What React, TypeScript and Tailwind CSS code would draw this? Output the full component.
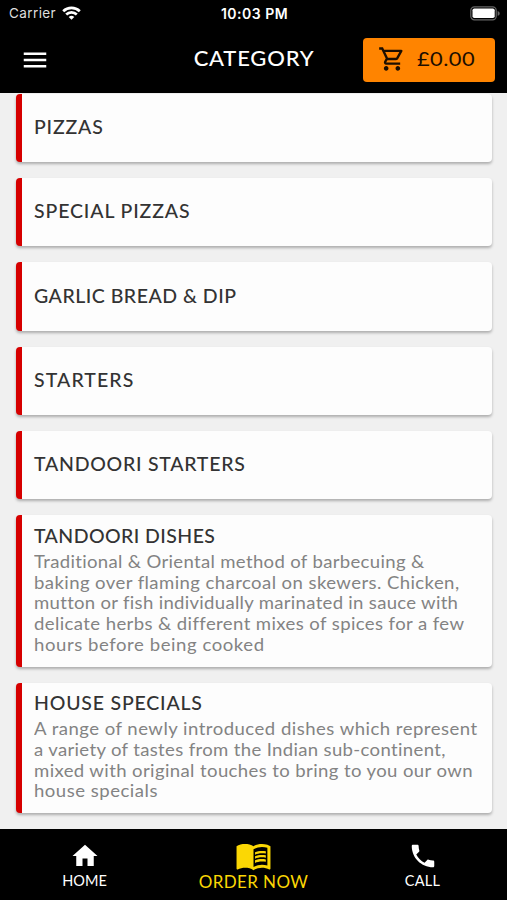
import { MdHome, MdMenu, MdMenuBook, MdOutlineShoppingCart, MdPhone } from "react-icons/md";

const categories = [
    { title: "PIZZAS", tracking: "tracking-[0.8px]", lines: [] },
    { title: "SPECIAL PIZZAS", tracking: "tracking-[0.87px]", lines: [] },
    { title: "GARLIC BREAD & DIP", tracking: "tracking-[0.5px]", lines: [] },
    { title: "STARTERS", tracking: "tracking-[1.1px]", lines: [] },
    { title: "TANDOORI STARTERS", tracking: "tracking-[0.74px]", lines: [] },
    {
        title: "TANDOORI DISHES",
        tracking: "tracking-[0.42px]",
        lines: [
            { text: "Traditional & Oriental method of barbecuing &", tracking: "tracking-[0.31px]" },
            { text: "baking over flaming charcoal on skewers. Chicken,", tracking: "tracking-[0.39px]" },
            { text: "mutton or fish individually marinated in sauce with", tracking: "tracking-[0.28px]" },
            { text: "delicate herbs & different mixes of spices for a few", tracking: "tracking-[0.37px]" },
            { text: "hours before being cooked", tracking: "tracking-[0.53px]" },
        ],
    },
    {
        title: "HOUSE SPECIALS",
        tracking: "tracking-[0.8px]",
        lines: [
            { text: "A range of newly introduced dishes which represent", tracking: "tracking-[0.45px]" },
            { text: "a variety of tastes from the Indian sub-continent,", tracking: "tracking-[0.32px]" },
            { text: "mixed with original touches to bring to you our own", tracking: "tracking-[0.36px]" },
            { text: "house specials", tracking: "tracking-[0.47px]" },
        ],
    },
];

type Category = (typeof categories)[number];

function StatusBar() {
    return (
        <div className="grid h-[27px] grid-cols-3 items-center pl-[9px] pr-[7px] font-[Inter,sans-serif] text-[13.5px] text-white">
            <div className="flex items-center gap-1.5">
                <span className="tracking-[0.4px] text-[#dedede]">Carrier</span>
                <svg className="mb-[2px] h-[14px] w-[19px]" viewBox="0 0 19 14" fill="none" stroke="#fff" strokeWidth="2.7">
                    <path d="M1.2 5.2a11.9 11.9 0 0 1 16.6 0" />
                    <path d="M4.2 8.5a7.6 7.6 0 0 1 10.6 0" />
                    <path d="M9.5 13.8 6.7 11a4 4 0 0 1 5.6 0z" fill="#fff" stroke="none" />
                </svg>
            </div>
            <span className="text-center text-[14px] font-semibold tracking-[0.5px]">10:03 PM</span>
            <svg className="h-[15px] w-[30px] justify-self-end" viewBox="0 0 30 15">
                <rect x="0.8" y="0.8" width="25.4" height="13" rx="3.6" fill="none" stroke="#666" strokeWidth="1.2" />
                <rect x="2.5" y="2.5" width="22.2" height="9.6" rx="1.8" fill="#fff" />
                <path d="M27.6 5v4.8c2.8-.8 2.8-4 0-4.8z" fill="#666" />
            </svg>
        </div>
    );
}

function Header() {
    return (
        <header className="h-[93px] shrink-0 bg-black">
            <StatusBar />
            <div className="grid h-[65px] grid-cols-[1fr_133px_1fr] items-center pl-[20px] pr-[12px] text-white">
                <MdMenu className="size-[30px]" />
                <h1 className="-ml-[7px] pb-[5px] text-center text-[22px] font-medium whitespace-nowrap tracking-[0.8px]">CATEGORY</h1>
                <button className="flex h-[44px] w-[132px] items-center gap-[11px] justify-self-end rounded-[4px] bg-[#ff8400] pl-[15px] pb-px text-[#1c0e00]">
                    <MdOutlineShoppingCart className="size-[28px]" />
                    <span className="origin-left scale-x-112 text-[19.5px] tracking-[0.4px]">£0.00</span>
                </button>
            </div>
        </header>
    );
}

function CategoryCard({ category }: { category: Category }) {
    const detailed = category.lines.length > 0;

    return (
        <article className={`flex shrink-0 flex-col rounded-[4px] border-l-[6px] border-[#d60000] bg-[#fdfdfd] pl-3 shadow-[0_2px_3px_rgba(0,0,0,0.28)] ${detailed ? "pt-[7.7px] pb-[11.2px]" : "h-[68.3px] justify-center pb-[1.6px]"}`}>
            <h2 className={`text-[19.5px] leading-[26px] font-medium whitespace-nowrap text-[#333] ${category.tracking}`}>{category.title}</h2>
            {detailed && (
                <div className="mt-[3px] origin-left scale-x-106">
                    {category.lines.map((line) => (
                        <p key={line.text} className={`text-[17.5px] leading-[20.7px] whitespace-nowrap text-[#838383] ${line.tracking}`}>
                            {line.text}
                        </p>
                    ))}
                </div>
            )}
        </article>
    );
}

function BottomNav() {
    return (
        <nav className="grid h-[71px] shrink-0 grid-cols-3 bg-black text-center text-[14.5px] text-white">
            <a className="flex flex-col items-center pt-[12px]">
                <MdHome className="size-[30px]" />
                <span className="-mt-px">HOME</span>
            </a>
            <a className="flex flex-col items-center pt-[8px] text-[#fbd704]">
                <MdMenuBook className="size-[37px]" />
                <span className="-mt-[5px] text-[17px] tracking-[0.4px]">ORDER NOW</span>
            </a>
            <a className="flex flex-col items-center pt-[12px]">
                <MdPhone className="size-[30px]" />
                <span className="-mt-px tracking-[0.3px]">CALL</span>
            </a>
        </nav>
    );
}

export default function App() {
    return (
        <div className="flex h-[900px] w-[507px] flex-col overflow-hidden bg-[#f0f0f0] font-[Lato,sans-serif]">
            <Header />
            <main className="flex min-h-0 flex-1 flex-col gap-4 overflow-hidden pt-[0.7px] pr-[15px] pl-4">
                {categories.map((category) => (
                    <CategoryCard key={category.title} category={category} />
                ))}
            </main>
            <BottomNav />
        </div>
    );
}
